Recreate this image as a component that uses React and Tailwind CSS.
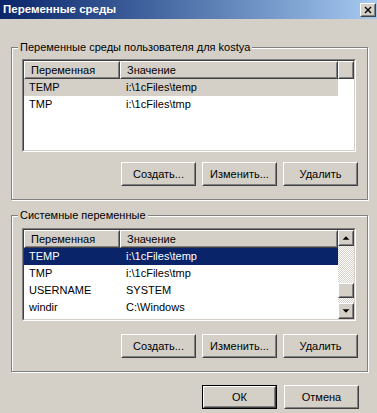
const font = { fontFamily: '"Liberation Sans", Arial, sans-serif' };

const Btn = ({ children, isDefault }) => (
  <div className={`h-[24px] w-[75px] ${isDefault ? "border border-black" : ""}`}>
    <div className="h-full w-full border border-t-white border-l-white border-r-[#404040] border-b-[#404040]">
      <div className="flex h-full w-full items-center justify-center border border-t-[#d4d0c8] border-l-[#d4d0c8] border-r-[#808080] border-b-[#808080] text-[11px] text-black">
        {children}
      </div>
    </div>
  </div>
);

const Raised = ({ className = "", children }) => (
  <div className={`border border-t-white border-l-white border-r-[#404040] border-b-[#404040] bg-[#d4d0c8] ${className}`}>
    <div className="flex h-full w-full items-center border border-t-[#d4d0c8] border-l-[#d4d0c8] border-r-[#808080] border-b-[#808080]">
      {children}
    </div>
  </div>
);

const HeaderCell = ({ width, children }) => (
  <Raised className={`h-[18px] shrink-0 ${width}`}>
    <span className="pl-[5px] text-[11px] text-black">{children}</span>
  </Raised>
);

const Arrow = ({ up }) => (
  <Raised className="h-[16px] w-[16px] shrink-0">
    <svg width="14" height="14" viewBox="0 0 14 14">
      {up ? <path d="M7 5 L3 9 L11 9 Z" fill="#000" /> : <path d="M3 5 L11 5 L7 9 Z" fill="#000" />}
    </svg>
  </Raised>
);

const ListView = ({ rows, selected, active, scroll }) => (
  <div className="h-[93px] border border-t-[#808080] border-l-[#808080] border-r-white border-b-white">
    <div className="flex h-full border border-t-[#404040] border-l-[#404040] border-r-[#d4d0c8] border-b-[#d4d0c8] bg-white">
      <div className="flex min-w-0 flex-1 flex-col overflow-hidden">
        <div className="flex">
          <HeaderCell width="w-[96px]">Переменная</HeaderCell>
          <HeaderCell width="w-[218px]">Значение</HeaderCell>
          {!scroll && <Raised className="h-[18px] flex-1" />}
        </div>
        {rows.map((r, i) => {
          const sel = i === selected;
          const cls = sel ? (active ? "bg-[#0a246a] text-white" : "bg-[#d4d0c8] text-black") : "text-black";
          return (
            <div key={r[0]} className={`flex h-[17px] w-[314px] shrink-0 items-center text-[11px] ${cls}`}>
              <span className="w-[96px] pl-[5px]">{r[0]}</span>
              <span className="pl-[6px]">{r[1]}</span>
            </div>
          );
        })}
      </div>
      {scroll && (
        <div className="flex w-[16px] flex-col">
          <Arrow up />
          <div className="flex flex-1 flex-col bg-[repeating-conic-gradient(#d4d0c8_0_25%,#ffffff_0_50%)] bg-[length:2px_2px]">
            <div className="h-[37px]" />
            <Raised className="h-[15px] w-[16px]" />
          </div>
          <Arrow />
        </div>
      )}
    </div>
  </div>
);

const Group = ({ label, className = "", children }) => (
  <div className={`border border-[#808080] shadow-[inset_1px_1px_0_#fff,1px_1px_0_#fff] ${className}`}>
    <div className="-mt-[7px] ml-[6px] w-fit bg-[#d4d0c8] px-[2px] text-[11px] leading-[13px] text-black">{label}</div>
    {children}
  </div>
);

const userVars = [
  ["TEMP", "i:\\1cFiles\\temp"],
  ["TMP", "i:\\1cFiles\\tmp"],
];

const sysVars = [
  ["TEMP", "i:\\1cFiles\\temp"],
  ["TMP", "i:\\1cFiles\\tmp"],
  ["USERNAME", "SYSTEM"],
  ["windir", "C:\\Windows"],
];

export default function App() {
  return (
    <div className="h-[413px] w-[377px] overflow-hidden bg-[#d4d0c8]" style={font}>
      <div className="flex h-[19px] items-center justify-between bg-gradient-to-r from-[#0a246a] to-[#a6caf0] pl-[3px] pr-[1px]">
        <span className="text-[11.5px] font-bold text-white">Переменные среды</span>
        <Raised className="h-[14px] w-[16px]">
          <svg width="14" height="12" viewBox="0 0 14 12" className="mx-auto">
            <path d="M3.5 2.5 L10.5 9.5 M10.5 2.5 L3.5 9.5" stroke="#000" strokeWidth="1.6" />
          </svg>
        </Raised>
      </div>

      <div className="pl-[11px] pr-[9px]">
        <Group label="Переменные среды пользователя для kostya" className="mt-[28px] pb-[13px]">
          <div className="mt-[5px] pl-[10px] pr-[11px]">
            <ListView rows={userVars} selected={0} active={false} />
          </div>
          <div className="mt-[10px] flex justify-end gap-[6px] pr-[9px]">
            <Btn>Создать...</Btn>
            <Btn>Изменить...</Btn>
            <Btn>Удалить</Btn>
          </div>
        </Group>

        <Group label="Системные переменные" className="mt-[15px] pb-[13px]">
          <div className="mt-[6px] pl-[10px] pr-[11px]">
            <ListView rows={sysVars} selected={0} active scroll />
          </div>
          <div className="mt-[13px] flex justify-end gap-[6px] pr-[9px]">
            <Btn>Создать...</Btn>
            <Btn>Изменить...</Btn>
            <Btn>Удалить</Btn>
          </div>
        </Group>

        <div className="mt-[13px] flex justify-end gap-[7px] pr-[9px]">
          <Btn isDefault>ОК</Btn>
          <Btn>Отмена</Btn>
        </div>
      </div>
    </div>
  );
}
